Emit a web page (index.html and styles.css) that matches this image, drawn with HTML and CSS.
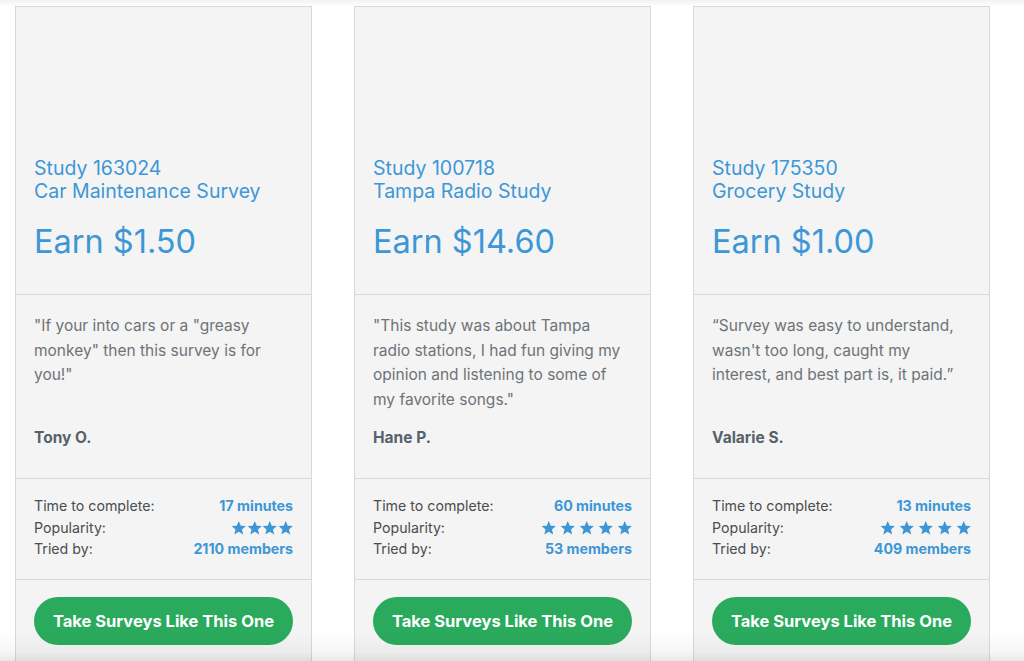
FILE: index.html
```html
<!DOCTYPE html>
<html lang="en">
<head>
<meta charset="utf-8">
<title>Surveys</title>
<link rel="stylesheet" href="styles.css">
</head>
<body>
<div class="page">
  <div class="cards">
    <div class="card">
      <div class="head">
        <div class="study">Study 163024<br>Car Maintenance Survey</div>
        <div class="earn">Earn $1.50</div>
      </div>
      <div class="quote">
        <p class="text">"If your into cars or a "greasy monkey" then this survey is for you!"</p>
        <p class="name">Tony O.</p>
      </div>
      <div class="stats">
        <div class="row"><span>Time to complete:</span><span class="val">17 minutes</span></div>
        <div class="row"><span>Popularity:</span><span class="stars tight">
          <svg viewBox="0 0 24 24"><path d="M12 1.5l3.1 7.3 7.9.6-6 5.2 1.9 7.8L12 18.2l-6.9 4.2 1.9-7.8-6-5.2 7.9-.6z"/></svg><svg viewBox="0 0 24 24"><path d="M12 1.5l3.1 7.3 7.9.6-6 5.2 1.9 7.8L12 18.2l-6.9 4.2 1.9-7.8-6-5.2 7.9-.6z"/></svg><svg viewBox="0 0 24 24"><path d="M12 1.5l3.1 7.3 7.9.6-6 5.2 1.9 7.8L12 18.2l-6.9 4.2 1.9-7.8-6-5.2 7.9-.6z"/></svg><svg viewBox="0 0 24 24"><path d="M12 1.5l3.1 7.3 7.9.6-6 5.2 1.9 7.8L12 18.2l-6.9 4.2 1.9-7.8-6-5.2 7.9-.6z"/></svg>
        </span></div>
        <div class="row"><span>Tried by:</span><span class="val">2110 members</span></div>
      </div>
      <div class="action"><a class="btn">Take Surveys Like This One</a></div>
    </div>

    <div class="card">
      <div class="head">
        <div class="study">Study 100718<br>Tampa Radio Study</div>
        <div class="earn">Earn $14.60</div>
      </div>
      <div class="quote">
        <p class="text">"This study was about Tampa radio stations, I had fun giving my opinion and listening to some of my favorite songs."</p>
        <p class="name">Hane P.</p>
      </div>
      <div class="stats">
        <div class="row"><span>Time to complete:</span><span class="val">60 minutes</span></div>
        <div class="row"><span>Popularity:</span><span class="stars">
          <svg viewBox="0 0 24 24"><path d="M12 1.5l3.1 7.3 7.9.6-6 5.2 1.9 7.8L12 18.2l-6.9 4.2 1.9-7.8-6-5.2 7.9-.6z"/></svg><svg viewBox="0 0 24 24"><path d="M12 1.5l3.1 7.3 7.9.6-6 5.2 1.9 7.8L12 18.2l-6.9 4.2 1.9-7.8-6-5.2 7.9-.6z"/></svg><svg viewBox="0 0 24 24"><path d="M12 1.5l3.1 7.3 7.9.6-6 5.2 1.9 7.8L12 18.2l-6.9 4.2 1.9-7.8-6-5.2 7.9-.6z"/></svg><svg viewBox="0 0 24 24"><path d="M12 1.5l3.1 7.3 7.9.6-6 5.2 1.9 7.8L12 18.2l-6.9 4.2 1.9-7.8-6-5.2 7.9-.6z"/></svg><svg viewBox="0 0 24 24"><path d="M12 1.5l3.1 7.3 7.9.6-6 5.2 1.9 7.8L12 18.2l-6.9 4.2 1.9-7.8-6-5.2 7.9-.6z"/></svg>
        </span></div>
        <div class="row"><span>Tried by:</span><span class="val">53 members</span></div>
      </div>
      <div class="action"><a class="btn">Take Surveys Like This One</a></div>
    </div>

    <div class="card">
      <div class="head">
        <div class="study">Study 175350<br>Grocery Study</div>
        <div class="earn">Earn $1.00</div>
      </div>
      <div class="quote">
        <p class="text">“Survey was easy to understand, wasn't too long, caught my interest, and best part is, it paid.”</p>
        <p class="name">Valarie S.</p>
      </div>
      <div class="stats">
        <div class="row"><span>Time to complete:</span><span class="val">13 minutes</span></div>
        <div class="row"><span>Popularity:</span><span class="stars">
          <svg viewBox="0 0 24 24"><path d="M12 1.5l3.1 7.3 7.9.6-6 5.2 1.9 7.8L12 18.2l-6.9 4.2 1.9-7.8-6-5.2 7.9-.6z"/></svg><svg viewBox="0 0 24 24"><path d="M12 1.5l3.1 7.3 7.9.6-6 5.2 1.9 7.8L12 18.2l-6.9 4.2 1.9-7.8-6-5.2 7.9-.6z"/></svg><svg viewBox="0 0 24 24"><path d="M12 1.5l3.1 7.3 7.9.6-6 5.2 1.9 7.8L12 18.2l-6.9 4.2 1.9-7.8-6-5.2 7.9-.6z"/></svg><svg viewBox="0 0 24 24"><path d="M12 1.5l3.1 7.3 7.9.6-6 5.2 1.9 7.8L12 18.2l-6.9 4.2 1.9-7.8-6-5.2 7.9-.6z"/></svg><svg viewBox="0 0 24 24"><path d="M12 1.5l3.1 7.3 7.9.6-6 5.2 1.9 7.8L12 18.2l-6.9 4.2 1.9-7.8-6-5.2 7.9-.6z"/></svg>
        </span></div>
        <div class="row"><span>Tried by:</span><span class="val">409 members</span></div>
      </div>
      <div class="action"><a class="btn">Take Surveys Like This One</a></div>
    </div>
  </div>
  <div class="shade"></div>
</div>
</body>
</html>
```

FILE: styles.css
```css
* { box-sizing: border-box; }
html, body { margin: 0; padding: 0; }
body {
  background: #fff;
  font-family: "Inter", "Open Sans", sans-serif;
  width: 1024px;
  height: 661px;
  overflow: hidden;
}
.page {
  position: relative;
  height: 661px;
  padding-top: 6px;
  background: linear-gradient(to bottom, #f3f3f3 0, #fbfbfb 5px, #fff 6px);
}
.cards {
  display: flex;
  gap: 42px;
  padding-left: 15px;
}
.card {
  width: 297px;
  height: 700px;
  background: #f4f4f4;
  border: 1px solid #d9d9d9;
  display: flex;
  flex-direction: column;
}
.head {
  height: 288px;
  display: flex;
  flex-direction: column;
  justify-content: flex-end;
  padding: 0 18px 33px 18px;
  border-bottom: 1px solid #d9d9d9;
  color: #3d97d6;
}
.study {
  font-size: 19.5px;
  line-height: 23px;
  transform: translateY(1px);
}
.earn {
  font-size: 32.5px;
  line-height: 38px;
  margin-top: 21px;
}
.quote {
  height: 184px;
  padding: 19px 20px 28px 18px;
  border-bottom: 1px solid #d9d9d9;
  display: flex;
  flex-direction: column;
  justify-content: space-between;
}
.quote p { margin: 0; }
.text {
  font-size: 15.5px;
  line-height: 24.5px;
  color: #6e7377;
}
.name {
  font-size: 15.5px;
  line-height: 24px;
  font-weight: 700;
  color: #56626a;
}
.stats {
  height: 101px;
  padding: 16px 18px 0 18px;
  border-bottom: 1px solid #d9d9d9;
}
.row {
  display: flex;
  justify-content: space-between;
  align-items: center;
  font-size: 14.2px;
  line-height: 21.5px;
  height: 21.5px;
  color: #4a4d50;
}
.val {
  color: #3d97d6;
  font-weight: 700;
}
.stars {
  display: flex;
  gap: 3.3px;
  fill: #3d97d6;
}
.stars svg { width: 15.5px; height: 15.5px; display: block; }
.stars.tight { gap: 0; }
.action {
  padding: 17px 18px 0 18px;
}
.btn {
  display: flex;
  align-items: center;
  justify-content: center;
  height: 48px;
  border-radius: 24px;
  background: #2aaa5c;
  color: #fff;
  font-weight: 700;
  font-size: 16.5px;
  text-decoration: none;
}
.shade {
  position: absolute;
  left: 0;
  right: 0;
  bottom: 0;
  height: 30px;
  background: linear-gradient(to bottom, rgba(0,0,0,0) 0, rgba(0,0,0,0.035) 70%, rgba(0,0,0,0.09) 100%);
  pointer-events: none;
}
```
